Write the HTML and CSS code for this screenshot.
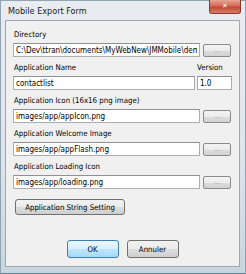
FILE: index.html
```html
<!DOCTYPE html>
<html lang="en">
<head>
  <meta charset="UTF-8" />
  <title>Mobile Export Form</title>
  <link rel="stylesheet" href="styles.css">
</head>
<body>
  <div class="window">
    <div class="titlebar">
      <span class="title">Mobile Export Form</span>
      <span class="close-btn">&#x2715;</span>
    </div>

    <div class="client">
      <div class="field">
        <label>Directory</label>
        <div class="row">
          <input type="text" class="text-input" value="C:\Dev\ttran\documents\MyWebNew\JMMobile\demo" />
          <button class="browse-btn">...</button>
        </div>
      </div>

      <div class="field">
        <div class="row labels">
          <label class="grow">Application Name</label>
          <label class="version-label">Version</label>
        </div>
        <div class="row">
          <input type="text" class="text-input name-input" value="contactlist" />
          <input type="text" class="text-input version-input" value="1.0" />
        </div>
      </div>

      <div class="field">
        <label>Application Icon (16x16 png image)</label>
        <div class="row">
          <input type="text" class="text-input" value="images/app/appIcon.png" />
          <button class="browse-btn">...</button>
        </div>
      </div>

      <div class="field">
        <label>Application Welcome Image</label>
        <div class="row">
          <input type="text" class="text-input" value="images/app/appFlash.png" />
          <button class="browse-btn">...</button>
        </div>
      </div>

      <div class="field">
        <label>Application Loading Icon</label>
        <div class="row">
          <input type="text" class="text-input" value="images/app/loading.png" />
          <button class="browse-btn">...</button>
        </div>
      </div>

      <button class="btn string-btn">Application String Setting</button>

      <div class="footer-btns">
        <button class="btn default-btn">OK</button>
        <button class="btn">Annuler</button>
      </div>
    </div>
  </div>
</body>
</html>
```

FILE: styles.css
```css
body {
  margin: 0;
  font-family: 'DejaVu Sans Condensed', 'DejaVu Sans', sans-serif;
  font-size: 7.8px;
  color: #000;
  background: #e7ecf0;
}

.window {
  width: 246px;
  height: 274px;
  box-sizing: border-box;
  padding: 0 5px 6px 4px;
  background: linear-gradient(to bottom, #e9edf1 0%, #dde4ea 60%, #c9d5de 100%);
  border: 1px solid #8fa3b1;
  border-bottom-color: #5e808d;
  display: flex;
  flex-direction: column;
}

.titlebar {
  height: 19px;
  display: flex;
  justify-content: space-between;
  align-items: flex-start;
  flex-shrink: 0;
}

.title {
  margin: 5px 0 0 3px;
  font-size: 9px;
  color: #1a1a1a;
}

.close-btn {
  width: 30px;
  height: 13px;
  margin-top: -1px;
  margin-right: -1px;
  background: linear-gradient(to bottom, #e8a493 0%, #d26a56 45%, #c04a36 55%, #d77e6a 100%);
  border: 1px solid #8a3a30;
  border-top: none;
  border-radius: 0 0 3px 3px;
  color: #fff;
  font-size: 7px;
  font-weight: bold;
  text-align: center;
  line-height: 12px;
}

.client {
  flex: 1;
  background: #f0f0f0;
  border: 1px solid #9aa9b4;
  padding: 8px 7px 0 7px;
  display: flex;
  flex-direction: column;
}

.field {
  margin-bottom: 5px;
}

.field label {
  display: block;
  height: 12px;
  line-height: 12px;
  margin-bottom: 2px;
  padding-left: 1px;
}

.row {
  display: flex;
  align-items: center;
}

.labels .grow { flex: 1; }

.version-label {
  width: 35px;
}

.text-input {
  flex: 1;
  min-width: 0;
  height: 14px;
  box-sizing: border-box;
  border: 1px solid #abadb3;
  border-top-color: #8e9095;
  background: #fff;
  padding: 0 2px;
  font-family: 'DejaVu Sans Condensed', 'DejaVu Sans', sans-serif;
  font-size: 8px;
  color: #000;
  outline: none;
}

.name-input { margin-right: 2px; }

.version-input {
  flex: 0 0 35px;
}

.browse-btn {
  width: 28px;
  height: 13px;
  margin-left: 3px;
  margin-right: 1px;
  padding: 0;
  box-sizing: border-box;
  border: 1px solid #8a8a8a;
  border-radius: 2px;
  background: linear-gradient(to bottom, #f4f4f4 0%, #ebebeb 50%, #dcdcdc 51%, #d2d2d2 100%);
  color: #777;
  font-size: 6px;
  line-height: 9px;
}

.btn {
  height: 16px;
  box-sizing: border-box;
  border: 1px solid #707070;
  border-radius: 3px;
  background: linear-gradient(to bottom, #f2f2f2 0%, #ebebeb 50%, #dddddd 51%, #cfcfcf 100%);
  font-family: 'DejaVu Sans Condensed', 'DejaVu Sans', sans-serif;
  font-size: 7.8px;
  color: #000;
  padding: 0;
}

.string-btn {
  align-self: flex-start;
  width: 110px;
  margin: 5px 0 0 2px;
}

.footer-btns {
  display: flex;
  justify-content: center;
  gap: 8px;
  margin-top: 25px;
}

.footer-btns .btn {
  width: 52px;
  height: 18px;
}

.default-btn {
  border-color: #3c7fb1;
  background: linear-gradient(to bottom, #eaf6fd 0%, #d9f0fc 50%, #bee6fd 51%, #a7d9f5 100%);
}
```
